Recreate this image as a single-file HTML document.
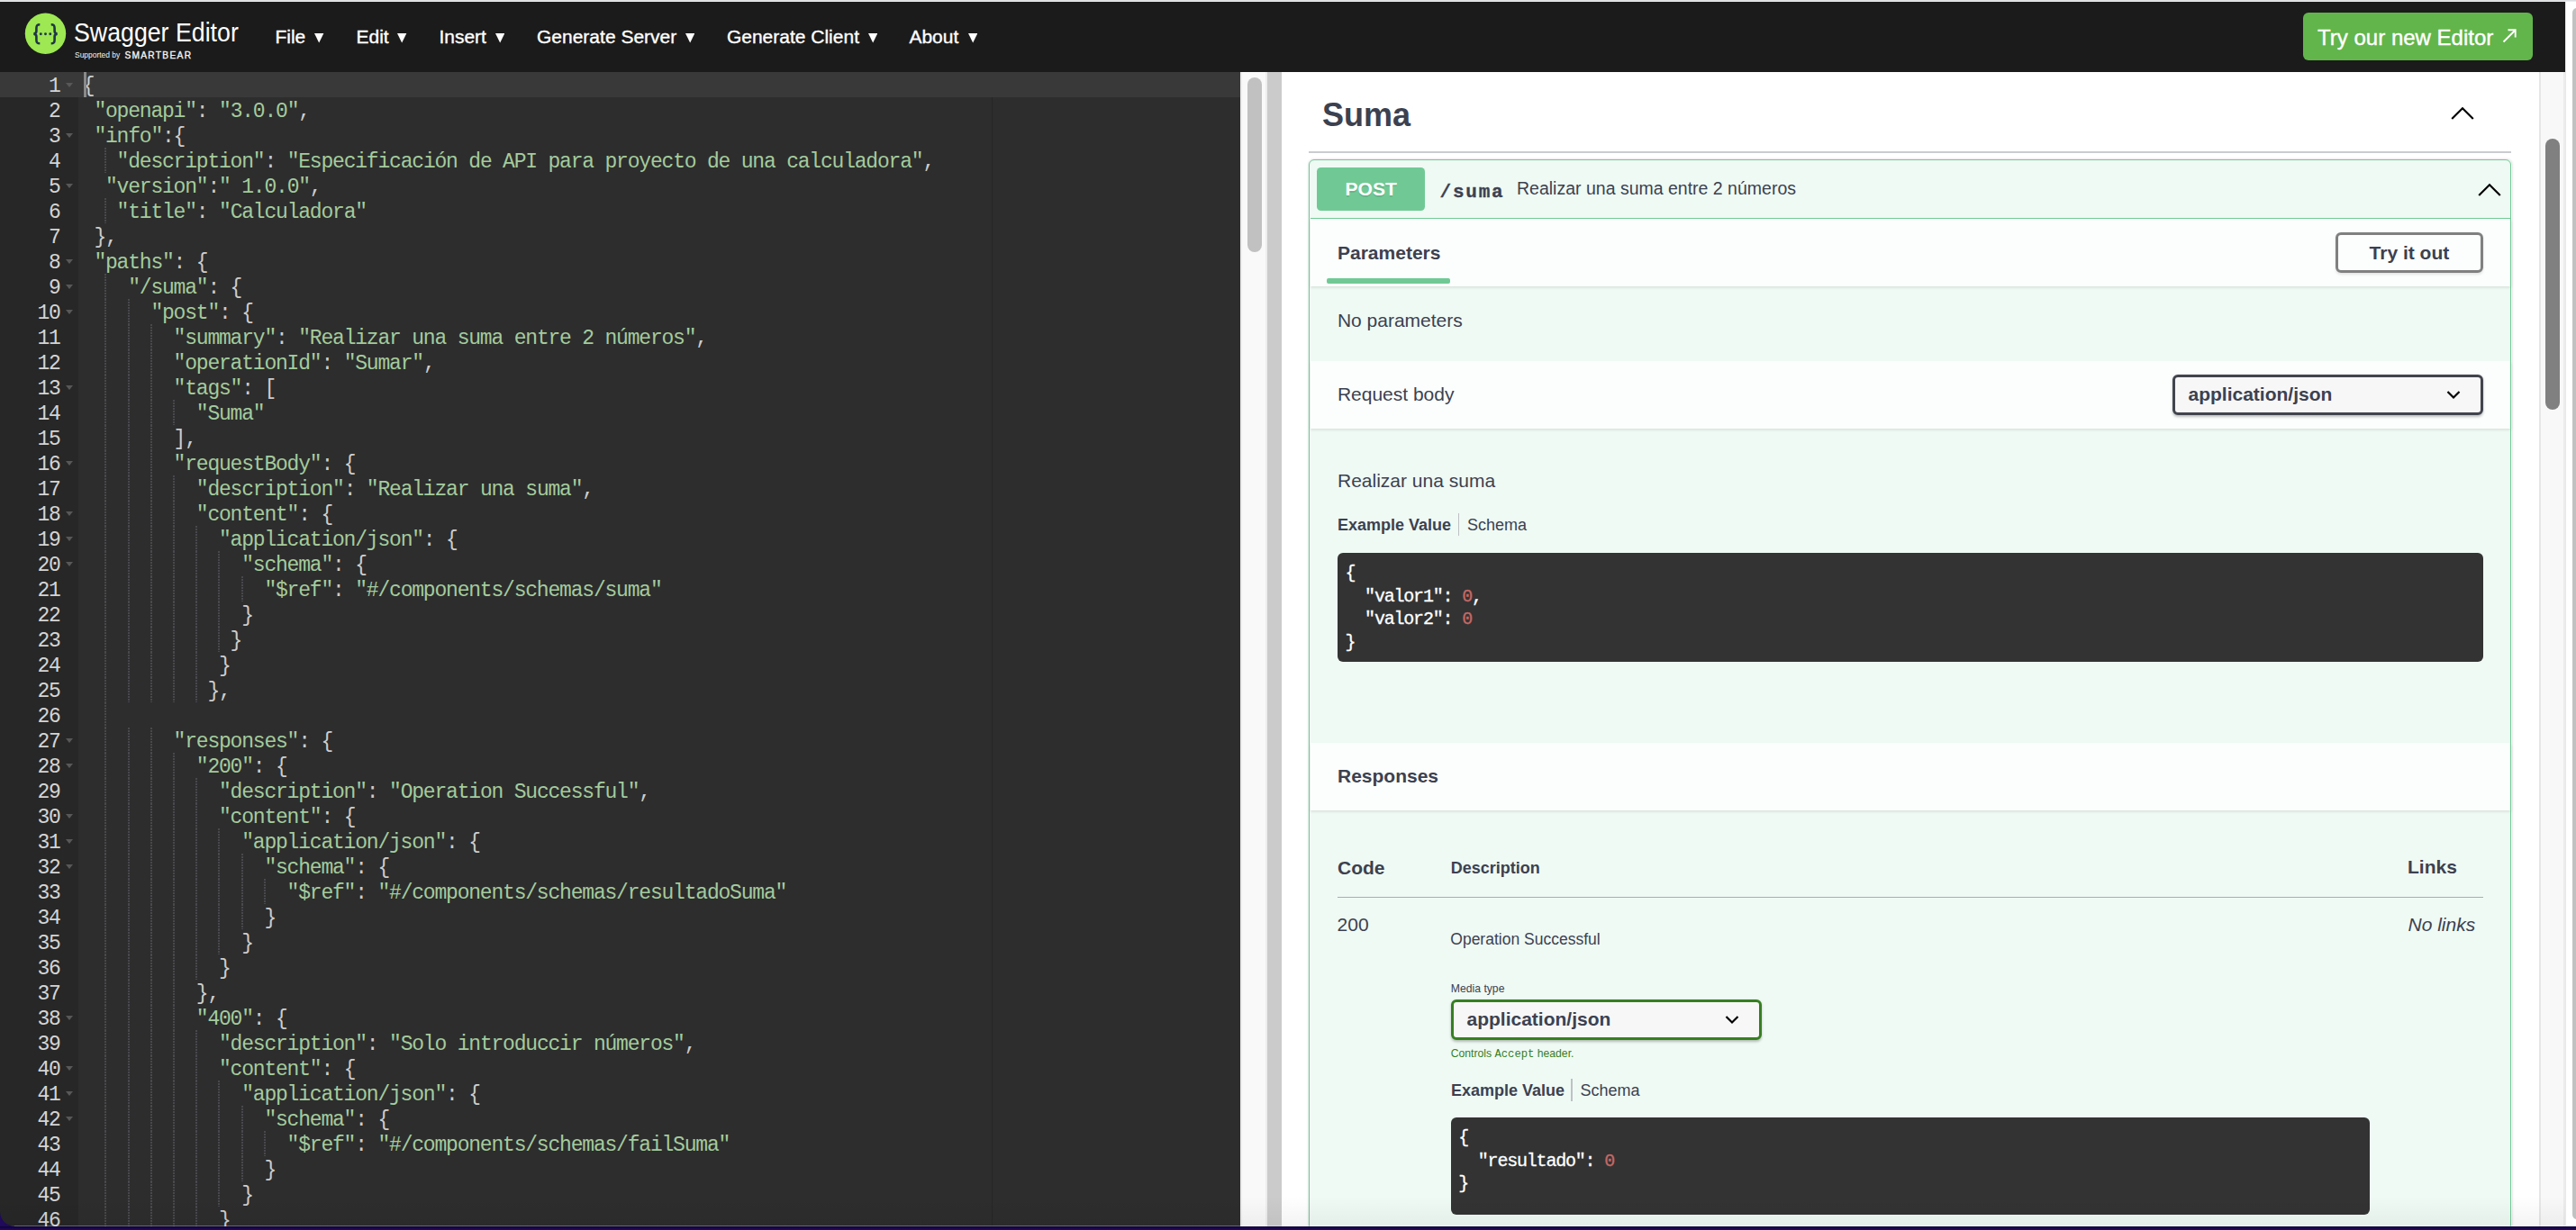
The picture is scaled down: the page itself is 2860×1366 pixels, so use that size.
<!DOCTYPE html>
<html><head><meta charset="utf-8"><title>Swagger Editor</title><style>
html,body{margin:0;padding:0;}
body{width:2860px;height:1366px;overflow:hidden;position:relative;background:#fff;font-family:"Liberation Sans",sans-serif;}
.a{position:absolute;box-sizing:content-box;}
.t{position:absolute;white-space:pre;}
.ln{position:absolute;left:0;width:66.6px;height:28px;line-height:28px;text-align:right;font-family:"Liberation Mono",monospace;font-size:23px;letter-spacing:-1.2px;color:#d4d4d4;}
.fw{position:absolute;left:73px;width:0;height:0;border-left:4px solid transparent;border-right:4px solid transparent;border-top:5px solid #585858;}
.ig{position:absolute;width:2px;height:28px;background:repeating-linear-gradient(#48484d 0 1.75px,transparent 1.75px 3px);}
.cl{position:absolute;height:28px;line-height:28px;white-space:pre;font-family:"Liberation Mono",monospace;font-size:23px;letter-spacing:-1.2px;color:#cccccc;}
.cl .s{color:#a4cb9d;}
.mc{position:absolute;height:25.5px;line-height:25.5px;white-space:pre;font-family:"Liberation Mono",monospace;font-size:20px;letter-spacing:-1.2px;color:#ffffff;-webkit-text-stroke:0.3px #fff;}
.mc .n{-webkit-text-stroke:0.3px #c56966;}
.mc .n{color:#c56966;}
</style></head><body>
<div class="a" style="left:0.00px;top:0.00px;width:2860.00px;height:1.00px;background:#dcdde0"></div>
<div class="a" style="left:0.00px;top:1.00px;width:2860.00px;height:1.20px;background:#ececec"></div>
<div class="a" style="left:0.00px;top:2.00px;width:2848.00px;height:78.00px;background:#1b1b1b"></div>
<svg class="a" style="left:0;top:0" width="300" height="80" viewBox="0 0 300 80">
<circle cx="50.5" cy="37.3" r="22.7" fill="#9de853"/>
<path d="M44.3,27.2 C41.2,27.2 40.4,28.4 40.4,31.2 L40.4,34.6 C40.4,36.5 39.4,37.4 37.4,37.6 C39.4,37.8 40.4,38.7 40.4,40.6 L40.4,44.2 C40.4,47 41.2,48.2 44.3,48.2" fill="none" stroke="#1f3545" stroke-width="2.6"/>
<path d="M56.7,27.2 C59.8,27.2 60.6,28.4 60.6,31.2 L60.6,34.6 C60.6,36.5 61.6,37.4 63.6,37.6 C61.6,37.8 60.6,38.7 60.6,40.6 L60.6,44.2 C60.6,47 59.8,48.2 56.7,48.2" fill="none" stroke="#1f3545" stroke-width="2.6"/>
<circle cx="45.3" cy="37.7" r="1.45" fill="#1f3545"/>
<circle cx="50.5" cy="37.7" r="1.45" fill="#1f3545"/>
<circle cx="55.8" cy="37.7" r="1.45" fill="#1f3545"/>
</svg>
<div class="t" style="left:81.50px;top:22.05px;font-size:29px;line-height:29px;color:#ffffff;font-weight:normal;font-style:normal;font-family:'Liberation Sans', sans-serif;transform:scaleX(0.922);transform-origin:0 0;">Swagger Editor</div>
<div class="t" style="left:82.50px;top:57.01px;font-size:9.2px;line-height:9.2px;color:#f4f4f4;font-weight:normal;font-style:normal;font-family:'Liberation Sans', sans-serif;transform:scaleX(0.92);transform-origin:0 0;">Supported by</div>
<div class="t" style="left:138.40px;top:56.56px;font-size:10.2px;line-height:10.2px;color:#f4f4f4;font-weight:normal;font-style:normal;font-family:'Liberation Sans', sans-serif;letter-spacing:1.3px;-webkit-text-stroke:0.35px #f4f4f4;">SMARTBEAR</div>
<div class="t" style="left:305.40px;top:30.12px;font-size:21px;line-height:21px;color:#ffffff;font-weight:normal;font-style:normal;font-family:'Liberation Sans', sans-serif;-webkit-text-stroke:0.35px #fff;">File</div>
<svg class="a" style="left:349.20px;top:37.3px" width="10.4" height="10.6" viewBox="0 0 10.4 10.6"><path d="M0,0 L10.4,0 L5.2,10.6 Z" fill="#ffffff"/></svg>
<div class="t" style="left:395.50px;top:30.12px;font-size:21px;line-height:21px;color:#ffffff;font-weight:normal;font-style:normal;font-family:'Liberation Sans', sans-serif;-webkit-text-stroke:0.35px #fff;">Edit</div>
<svg class="a" style="left:441.40px;top:37.3px" width="10.4" height="10.6" viewBox="0 0 10.4 10.6"><path d="M0,0 L10.4,0 L5.2,10.6 Z" fill="#ffffff"/></svg>
<div class="t" style="left:487.40px;top:30.12px;font-size:21px;line-height:21px;color:#ffffff;font-weight:normal;font-style:normal;font-family:'Liberation Sans', sans-serif;-webkit-text-stroke:0.35px #fff;">Insert</div>
<svg class="a" style="left:549.50px;top:37.3px" width="10.4" height="10.6" viewBox="0 0 10.4 10.6"><path d="M0,0 L10.4,0 L5.2,10.6 Z" fill="#ffffff"/></svg>
<div class="t" style="left:596.00px;top:30.12px;font-size:21px;line-height:21px;color:#ffffff;font-weight:normal;font-style:normal;font-family:'Liberation Sans', sans-serif;-webkit-text-stroke:0.35px #fff;">Generate Server</div>
<svg class="a" style="left:761.00px;top:37.3px" width="10.4" height="10.6" viewBox="0 0 10.4 10.6"><path d="M0,0 L10.4,0 L5.2,10.6 Z" fill="#ffffff"/></svg>
<div class="t" style="left:806.90px;top:30.12px;font-size:21px;line-height:21px;color:#ffffff;font-weight:normal;font-style:normal;font-family:'Liberation Sans', sans-serif;-webkit-text-stroke:0.35px #fff;">Generate Client</div>
<svg class="a" style="left:964.10px;top:37.3px" width="10.4" height="10.6" viewBox="0 0 10.4 10.6"><path d="M0,0 L10.4,0 L5.2,10.6 Z" fill="#ffffff"/></svg>
<div class="t" style="left:1009.40px;top:30.12px;font-size:21px;line-height:21px;color:#ffffff;font-weight:normal;font-style:normal;font-family:'Liberation Sans', sans-serif;-webkit-text-stroke:0.35px #fff;">About</div>
<svg class="a" style="left:1074.50px;top:37.3px" width="10.4" height="10.6" viewBox="0 0 10.4 10.6"><path d="M0,0 L10.4,0 L5.2,10.6 Z" fill="#ffffff"/></svg>
<div class="a" style="left:2557.00px;top:14.00px;width:255.00px;height:53.00px;background:#62b54b;border-radius:6px"></div>
<div class="t" style="left:2573.10px;top:29.58px;font-size:24px;line-height:24px;color:#ffffff;font-weight:normal;font-style:normal;font-family:'Liberation Sans', sans-serif;-webkit-text-stroke:0.4px #fff;">Try our new Editor</div>
<svg class="a" style="left:2777px;top:30px" width="20" height="20" viewBox="0 0 20 20"><path d="M2.5,16.5 L15.5,3.5 M7.5,3.3 L15.7,3.3 L15.7,11.5" fill="none" stroke="#ffffff" stroke-width="1.9"/></svg>
<div class="a" style="left:2848.00px;top:80.00px;width:12.00px;height:1282.00px;background:#ffffff"></div>
<div class="a" style="left:2848.00px;top:2.00px;width:12.00px;height:78.00px;background:#ffffff"></div>
<div class="a" style="left:2848.00px;top:2.00px;width:1.00px;height:1360.00px;background:#e9e9e9"></div>
<div class="a" style="left:2856.00px;top:9.00px;width:10.00px;height:1344.50px;background:#c1c1c1;border-radius:6px"></div>
<div class="a" style="left:0.00px;top:80.00px;width:1377.00px;height:1282.00px;background:#2d2d2d"></div>
<div class="a" style="left:0.00px;top:80.00px;width:87.00px;height:1282.00px;background:#272727"></div>
<div class="a" style="left:1101.00px;top:108.00px;width:1.20px;height:1254.00px;background:#262626"></div>
<div class="a" style="left:0.00px;top:80.00px;width:1377.00px;height:28.00px;background:#393939"></div>
<div class="a" style="left:0;top:80px;width:1377px;height:1282px;overflow:hidden">
<div class="ln" style="top:1.9px">1</div>
<div class="fw" style="top:11.8px"></div>
<div class="cl" style="top:1.9px;left:91.80px">{</div>
<div class="ln" style="top:29.9px">2</div>
<div class="cl" style="top:29.9px;left:104.40px"><span class="s">&quot;openapi&quot;</span>: <span class="s">&quot;3.0.0&quot;</span>,</div>
<div class="ln" style="top:57.9px">3</div>
<div class="fw" style="top:67.8px"></div>
<div class="cl" style="top:57.9px;left:104.40px"><span class="s">&quot;info&quot;</span>:{</div>
<div class="ln" style="top:85.9px">4</div>
<div class="ig" style="left:116.4px;top:84.0px"></div>
<div class="cl" style="top:85.9px;left:129.60px"><span class="s">&quot;description&quot;</span>: <span class="s">&quot;Especificación de API para proyecto de una calculadora&quot;</span>,</div>
<div class="ln" style="top:113.9px">5</div>
<div class="fw" style="top:123.8px"></div>
<div class="cl" style="top:113.9px;left:117.00px"><span class="s">&quot;version&quot;</span>:<span class="s">&quot; 1.0.0&quot;</span>,</div>
<div class="ln" style="top:141.9px">6</div>
<div class="ig" style="left:116.4px;top:140.0px"></div>
<div class="cl" style="top:141.9px;left:129.60px"><span class="s">&quot;title&quot;</span>: <span class="s">&quot;Calculadora&quot;</span></div>
<div class="ln" style="top:169.9px">7</div>
<div class="cl" style="top:169.9px;left:104.40px">},</div>
<div class="ln" style="top:197.9px">8</div>
<div class="fw" style="top:207.8px"></div>
<div class="cl" style="top:197.9px;left:104.40px"><span class="s">&quot;paths&quot;</span>: {</div>
<div class="ln" style="top:225.9px">9</div>
<div class="fw" style="top:235.8px"></div>
<div class="ig" style="left:116.4px;top:224.0px"></div>
<div class="cl" style="top:225.9px;left:142.20px"><span class="s">&quot;/suma&quot;</span>: {</div>
<div class="ln" style="top:253.9px">10</div>
<div class="fw" style="top:263.8px"></div>
<div class="ig" style="left:116.4px;top:252.0px"></div>
<div class="ig" style="left:141.6px;top:252.0px"></div>
<div class="cl" style="top:253.9px;left:167.40px"><span class="s">&quot;post&quot;</span>: {</div>
<div class="ln" style="top:281.9px">11</div>
<div class="ig" style="left:116.4px;top:280.0px"></div>
<div class="ig" style="left:141.6px;top:280.0px"></div>
<div class="ig" style="left:166.8px;top:280.0px"></div>
<div class="cl" style="top:281.9px;left:192.60px"><span class="s">&quot;summary&quot;</span>: <span class="s">&quot;Realizar una suma entre 2 números&quot;</span>,</div>
<div class="ln" style="top:309.9px">12</div>
<div class="ig" style="left:116.4px;top:308.0px"></div>
<div class="ig" style="left:141.6px;top:308.0px"></div>
<div class="ig" style="left:166.8px;top:308.0px"></div>
<div class="cl" style="top:309.9px;left:192.60px"><span class="s">&quot;operationId&quot;</span>: <span class="s">&quot;Sumar&quot;</span>,</div>
<div class="ln" style="top:337.9px">13</div>
<div class="fw" style="top:347.8px"></div>
<div class="ig" style="left:116.4px;top:336.0px"></div>
<div class="ig" style="left:141.6px;top:336.0px"></div>
<div class="ig" style="left:166.8px;top:336.0px"></div>
<div class="cl" style="top:337.9px;left:192.60px"><span class="s">&quot;tags&quot;</span>: [</div>
<div class="ln" style="top:365.9px">14</div>
<div class="ig" style="left:116.4px;top:364.0px"></div>
<div class="ig" style="left:141.6px;top:364.0px"></div>
<div class="ig" style="left:166.8px;top:364.0px"></div>
<div class="ig" style="left:192.0px;top:364.0px"></div>
<div class="cl" style="top:365.9px;left:217.80px"><span class="s">&quot;Suma&quot;</span></div>
<div class="ln" style="top:393.9px">15</div>
<div class="ig" style="left:116.4px;top:392.0px"></div>
<div class="ig" style="left:141.6px;top:392.0px"></div>
<div class="ig" style="left:166.8px;top:392.0px"></div>
<div class="cl" style="top:393.9px;left:192.60px">],</div>
<div class="ln" style="top:421.9px">16</div>
<div class="fw" style="top:431.8px"></div>
<div class="ig" style="left:116.4px;top:420.0px"></div>
<div class="ig" style="left:141.6px;top:420.0px"></div>
<div class="ig" style="left:166.8px;top:420.0px"></div>
<div class="cl" style="top:421.9px;left:192.60px"><span class="s">&quot;requestBody&quot;</span>: {</div>
<div class="ln" style="top:449.9px">17</div>
<div class="ig" style="left:116.4px;top:448.0px"></div>
<div class="ig" style="left:141.6px;top:448.0px"></div>
<div class="ig" style="left:166.8px;top:448.0px"></div>
<div class="ig" style="left:192.0px;top:448.0px"></div>
<div class="cl" style="top:449.9px;left:217.80px"><span class="s">&quot;description&quot;</span>: <span class="s">&quot;Realizar una suma&quot;</span>,</div>
<div class="ln" style="top:477.9px">18</div>
<div class="fw" style="top:487.8px"></div>
<div class="ig" style="left:116.4px;top:476.0px"></div>
<div class="ig" style="left:141.6px;top:476.0px"></div>
<div class="ig" style="left:166.8px;top:476.0px"></div>
<div class="ig" style="left:192.0px;top:476.0px"></div>
<div class="cl" style="top:477.9px;left:217.80px"><span class="s">&quot;content&quot;</span>: {</div>
<div class="ln" style="top:505.9px">19</div>
<div class="fw" style="top:515.8px"></div>
<div class="ig" style="left:116.4px;top:504.0px"></div>
<div class="ig" style="left:141.6px;top:504.0px"></div>
<div class="ig" style="left:166.8px;top:504.0px"></div>
<div class="ig" style="left:192.0px;top:504.0px"></div>
<div class="ig" style="left:217.2px;top:504.0px"></div>
<div class="cl" style="top:505.9px;left:243.00px"><span class="s">&quot;application/json&quot;</span>: {</div>
<div class="ln" style="top:533.9px">20</div>
<div class="fw" style="top:543.8px"></div>
<div class="ig" style="left:116.4px;top:532.0px"></div>
<div class="ig" style="left:141.6px;top:532.0px"></div>
<div class="ig" style="left:166.8px;top:532.0px"></div>
<div class="ig" style="left:192.0px;top:532.0px"></div>
<div class="ig" style="left:217.2px;top:532.0px"></div>
<div class="ig" style="left:242.4px;top:532.0px"></div>
<div class="cl" style="top:533.9px;left:268.20px"><span class="s">&quot;schema&quot;</span>: {</div>
<div class="ln" style="top:561.9px">21</div>
<div class="ig" style="left:116.4px;top:560.0px"></div>
<div class="ig" style="left:141.6px;top:560.0px"></div>
<div class="ig" style="left:166.8px;top:560.0px"></div>
<div class="ig" style="left:192.0px;top:560.0px"></div>
<div class="ig" style="left:217.2px;top:560.0px"></div>
<div class="ig" style="left:242.4px;top:560.0px"></div>
<div class="ig" style="left:267.6px;top:560.0px"></div>
<div class="cl" style="top:561.9px;left:293.40px"><span class="s">&quot;$ref&quot;</span>: <span class="s">&quot;#/components/schemas/suma&quot;</span></div>
<div class="ln" style="top:589.9px">22</div>
<div class="ig" style="left:116.4px;top:588.0px"></div>
<div class="ig" style="left:141.6px;top:588.0px"></div>
<div class="ig" style="left:166.8px;top:588.0px"></div>
<div class="ig" style="left:192.0px;top:588.0px"></div>
<div class="ig" style="left:217.2px;top:588.0px"></div>
<div class="ig" style="left:242.4px;top:588.0px"></div>
<div class="cl" style="top:589.9px;left:268.20px">}</div>
<div class="ln" style="top:617.9px">23</div>
<div class="ig" style="left:116.4px;top:616.0px"></div>
<div class="ig" style="left:141.6px;top:616.0px"></div>
<div class="ig" style="left:166.8px;top:616.0px"></div>
<div class="ig" style="left:192.0px;top:616.0px"></div>
<div class="ig" style="left:217.2px;top:616.0px"></div>
<div class="ig" style="left:242.4px;top:616.0px"></div>
<div class="cl" style="top:617.9px;left:255.60px">}</div>
<div class="ln" style="top:645.9px">24</div>
<div class="ig" style="left:116.4px;top:644.0px"></div>
<div class="ig" style="left:141.6px;top:644.0px"></div>
<div class="ig" style="left:166.8px;top:644.0px"></div>
<div class="ig" style="left:192.0px;top:644.0px"></div>
<div class="ig" style="left:217.2px;top:644.0px"></div>
<div class="cl" style="top:645.9px;left:243.00px">}</div>
<div class="ln" style="top:673.9px">25</div>
<div class="ig" style="left:116.4px;top:672.0px"></div>
<div class="ig" style="left:141.6px;top:672.0px"></div>
<div class="ig" style="left:166.8px;top:672.0px"></div>
<div class="ig" style="left:192.0px;top:672.0px"></div>
<div class="ig" style="left:217.2px;top:672.0px"></div>
<div class="cl" style="top:673.9px;left:230.40px">},</div>
<div class="ln" style="top:701.9px">26</div>
<div class="ig" style="left:116.4px;top:700.0px"></div>
<div class="ln" style="top:729.9px">27</div>
<div class="fw" style="top:739.8px"></div>
<div class="ig" style="left:116.4px;top:728.0px"></div>
<div class="ig" style="left:141.6px;top:728.0px"></div>
<div class="ig" style="left:166.8px;top:728.0px"></div>
<div class="cl" style="top:729.9px;left:192.60px"><span class="s">&quot;responses&quot;</span>: {</div>
<div class="ln" style="top:757.9px">28</div>
<div class="fw" style="top:767.8px"></div>
<div class="ig" style="left:116.4px;top:756.0px"></div>
<div class="ig" style="left:141.6px;top:756.0px"></div>
<div class="ig" style="left:166.8px;top:756.0px"></div>
<div class="ig" style="left:192.0px;top:756.0px"></div>
<div class="cl" style="top:757.9px;left:217.80px"><span class="s">&quot;200&quot;</span>: {</div>
<div class="ln" style="top:785.9px">29</div>
<div class="ig" style="left:116.4px;top:784.0px"></div>
<div class="ig" style="left:141.6px;top:784.0px"></div>
<div class="ig" style="left:166.8px;top:784.0px"></div>
<div class="ig" style="left:192.0px;top:784.0px"></div>
<div class="ig" style="left:217.2px;top:784.0px"></div>
<div class="cl" style="top:785.9px;left:243.00px"><span class="s">&quot;description&quot;</span>: <span class="s">&quot;Operation Successful&quot;</span>,</div>
<div class="ln" style="top:813.9px">30</div>
<div class="fw" style="top:823.8px"></div>
<div class="ig" style="left:116.4px;top:812.0px"></div>
<div class="ig" style="left:141.6px;top:812.0px"></div>
<div class="ig" style="left:166.8px;top:812.0px"></div>
<div class="ig" style="left:192.0px;top:812.0px"></div>
<div class="ig" style="left:217.2px;top:812.0px"></div>
<div class="cl" style="top:813.9px;left:243.00px"><span class="s">&quot;content&quot;</span>: {</div>
<div class="ln" style="top:841.9px">31</div>
<div class="fw" style="top:851.8px"></div>
<div class="ig" style="left:116.4px;top:840.0px"></div>
<div class="ig" style="left:141.6px;top:840.0px"></div>
<div class="ig" style="left:166.8px;top:840.0px"></div>
<div class="ig" style="left:192.0px;top:840.0px"></div>
<div class="ig" style="left:217.2px;top:840.0px"></div>
<div class="ig" style="left:242.4px;top:840.0px"></div>
<div class="cl" style="top:841.9px;left:268.20px"><span class="s">&quot;application/json&quot;</span>: {</div>
<div class="ln" style="top:869.9px">32</div>
<div class="fw" style="top:879.8px"></div>
<div class="ig" style="left:116.4px;top:868.0px"></div>
<div class="ig" style="left:141.6px;top:868.0px"></div>
<div class="ig" style="left:166.8px;top:868.0px"></div>
<div class="ig" style="left:192.0px;top:868.0px"></div>
<div class="ig" style="left:217.2px;top:868.0px"></div>
<div class="ig" style="left:242.4px;top:868.0px"></div>
<div class="ig" style="left:267.6px;top:868.0px"></div>
<div class="cl" style="top:869.9px;left:293.40px"><span class="s">&quot;schema&quot;</span>: {</div>
<div class="ln" style="top:897.9px">33</div>
<div class="ig" style="left:116.4px;top:896.0px"></div>
<div class="ig" style="left:141.6px;top:896.0px"></div>
<div class="ig" style="left:166.8px;top:896.0px"></div>
<div class="ig" style="left:192.0px;top:896.0px"></div>
<div class="ig" style="left:217.2px;top:896.0px"></div>
<div class="ig" style="left:242.4px;top:896.0px"></div>
<div class="ig" style="left:267.6px;top:896.0px"></div>
<div class="ig" style="left:292.8px;top:896.0px"></div>
<div class="cl" style="top:897.9px;left:318.60px"><span class="s">&quot;$ref&quot;</span>: <span class="s">&quot;#/components/schemas/resultadoSuma&quot;</span></div>
<div class="ln" style="top:925.9px">34</div>
<div class="ig" style="left:116.4px;top:924.0px"></div>
<div class="ig" style="left:141.6px;top:924.0px"></div>
<div class="ig" style="left:166.8px;top:924.0px"></div>
<div class="ig" style="left:192.0px;top:924.0px"></div>
<div class="ig" style="left:217.2px;top:924.0px"></div>
<div class="ig" style="left:242.4px;top:924.0px"></div>
<div class="ig" style="left:267.6px;top:924.0px"></div>
<div class="cl" style="top:925.9px;left:293.40px">}</div>
<div class="ln" style="top:953.9px">35</div>
<div class="ig" style="left:116.4px;top:952.0px"></div>
<div class="ig" style="left:141.6px;top:952.0px"></div>
<div class="ig" style="left:166.8px;top:952.0px"></div>
<div class="ig" style="left:192.0px;top:952.0px"></div>
<div class="ig" style="left:217.2px;top:952.0px"></div>
<div class="ig" style="left:242.4px;top:952.0px"></div>
<div class="cl" style="top:953.9px;left:268.20px">}</div>
<div class="ln" style="top:981.9px">36</div>
<div class="ig" style="left:116.4px;top:980.0px"></div>
<div class="ig" style="left:141.6px;top:980.0px"></div>
<div class="ig" style="left:166.8px;top:980.0px"></div>
<div class="ig" style="left:192.0px;top:980.0px"></div>
<div class="ig" style="left:217.2px;top:980.0px"></div>
<div class="cl" style="top:981.9px;left:243.00px">}</div>
<div class="ln" style="top:1009.9px">37</div>
<div class="ig" style="left:116.4px;top:1008.0px"></div>
<div class="ig" style="left:141.6px;top:1008.0px"></div>
<div class="ig" style="left:166.8px;top:1008.0px"></div>
<div class="ig" style="left:192.0px;top:1008.0px"></div>
<div class="cl" style="top:1009.9px;left:217.80px">},</div>
<div class="ln" style="top:1037.9px">38</div>
<div class="fw" style="top:1047.8px"></div>
<div class="ig" style="left:116.4px;top:1036.0px"></div>
<div class="ig" style="left:141.6px;top:1036.0px"></div>
<div class="ig" style="left:166.8px;top:1036.0px"></div>
<div class="ig" style="left:192.0px;top:1036.0px"></div>
<div class="cl" style="top:1037.9px;left:217.80px"><span class="s">&quot;400&quot;</span>: {</div>
<div class="ln" style="top:1065.9px">39</div>
<div class="ig" style="left:116.4px;top:1064.0px"></div>
<div class="ig" style="left:141.6px;top:1064.0px"></div>
<div class="ig" style="left:166.8px;top:1064.0px"></div>
<div class="ig" style="left:192.0px;top:1064.0px"></div>
<div class="ig" style="left:217.2px;top:1064.0px"></div>
<div class="cl" style="top:1065.9px;left:243.00px"><span class="s">&quot;description&quot;</span>: <span class="s">&quot;Solo introduccir números&quot;</span>,</div>
<div class="ln" style="top:1093.9px">40</div>
<div class="fw" style="top:1103.8px"></div>
<div class="ig" style="left:116.4px;top:1092.0px"></div>
<div class="ig" style="left:141.6px;top:1092.0px"></div>
<div class="ig" style="left:166.8px;top:1092.0px"></div>
<div class="ig" style="left:192.0px;top:1092.0px"></div>
<div class="ig" style="left:217.2px;top:1092.0px"></div>
<div class="cl" style="top:1093.9px;left:243.00px"><span class="s">&quot;content&quot;</span>: {</div>
<div class="ln" style="top:1121.9px">41</div>
<div class="fw" style="top:1131.8px"></div>
<div class="ig" style="left:116.4px;top:1120.0px"></div>
<div class="ig" style="left:141.6px;top:1120.0px"></div>
<div class="ig" style="left:166.8px;top:1120.0px"></div>
<div class="ig" style="left:192.0px;top:1120.0px"></div>
<div class="ig" style="left:217.2px;top:1120.0px"></div>
<div class="ig" style="left:242.4px;top:1120.0px"></div>
<div class="cl" style="top:1121.9px;left:268.20px"><span class="s">&quot;application/json&quot;</span>: {</div>
<div class="ln" style="top:1149.9px">42</div>
<div class="fw" style="top:1159.8px"></div>
<div class="ig" style="left:116.4px;top:1148.0px"></div>
<div class="ig" style="left:141.6px;top:1148.0px"></div>
<div class="ig" style="left:166.8px;top:1148.0px"></div>
<div class="ig" style="left:192.0px;top:1148.0px"></div>
<div class="ig" style="left:217.2px;top:1148.0px"></div>
<div class="ig" style="left:242.4px;top:1148.0px"></div>
<div class="ig" style="left:267.6px;top:1148.0px"></div>
<div class="cl" style="top:1149.9px;left:293.40px"><span class="s">&quot;schema&quot;</span>: {</div>
<div class="ln" style="top:1177.9px">43</div>
<div class="ig" style="left:116.4px;top:1176.0px"></div>
<div class="ig" style="left:141.6px;top:1176.0px"></div>
<div class="ig" style="left:166.8px;top:1176.0px"></div>
<div class="ig" style="left:192.0px;top:1176.0px"></div>
<div class="ig" style="left:217.2px;top:1176.0px"></div>
<div class="ig" style="left:242.4px;top:1176.0px"></div>
<div class="ig" style="left:267.6px;top:1176.0px"></div>
<div class="ig" style="left:292.8px;top:1176.0px"></div>
<div class="cl" style="top:1177.9px;left:318.60px"><span class="s">&quot;$ref&quot;</span>: <span class="s">&quot;#/components/schemas/failSuma&quot;</span></div>
<div class="ln" style="top:1205.9px">44</div>
<div class="ig" style="left:116.4px;top:1204.0px"></div>
<div class="ig" style="left:141.6px;top:1204.0px"></div>
<div class="ig" style="left:166.8px;top:1204.0px"></div>
<div class="ig" style="left:192.0px;top:1204.0px"></div>
<div class="ig" style="left:217.2px;top:1204.0px"></div>
<div class="ig" style="left:242.4px;top:1204.0px"></div>
<div class="ig" style="left:267.6px;top:1204.0px"></div>
<div class="cl" style="top:1205.9px;left:293.40px">}</div>
<div class="ln" style="top:1233.9px">45</div>
<div class="ig" style="left:116.4px;top:1232.0px"></div>
<div class="ig" style="left:141.6px;top:1232.0px"></div>
<div class="ig" style="left:166.8px;top:1232.0px"></div>
<div class="ig" style="left:192.0px;top:1232.0px"></div>
<div class="ig" style="left:217.2px;top:1232.0px"></div>
<div class="ig" style="left:242.4px;top:1232.0px"></div>
<div class="cl" style="top:1233.9px;left:268.20px">}</div>
<div class="ln" style="top:1261.9px">46</div>
<div class="ig" style="left:116.4px;top:1260.0px"></div>
<div class="ig" style="left:141.6px;top:1260.0px"></div>
<div class="ig" style="left:166.8px;top:1260.0px"></div>
<div class="ig" style="left:192.0px;top:1260.0px"></div>
<div class="ig" style="left:217.2px;top:1260.0px"></div>
<div class="cl" style="top:1261.9px;left:243.00px">}</div>
<div class="a" style="left:93px;top:0;width:3px;height:28px;background:#8a8a8a"></div>
</div>
<div class="a" style="left:1377.00px;top:80.00px;width:30.00px;height:1282.00px;background:#f9f9f9"></div>
<div class="a" style="left:1377.00px;top:80.00px;width:1.50px;height:1282.00px;background:#ececec"></div>
<div class="a" style="left:1405.00px;top:80.00px;width:2.00px;height:1282.00px;background:#eeeeee"></div>
<div class="a" style="left:1385.00px;top:86.00px;width:16.20px;height:194.00px;background:#c1c1c1;border-radius:8px"></div>
<div class="a" style="left:1407.00px;top:80.00px;width:16.00px;height:1282.00px;background:#cbcbcb"></div>
<div class="a" style="left:1423.00px;top:80.00px;width:1425.00px;height:1282.00px;background:#ffffff"></div>
<div class="a" style="left:2819.00px;top:80.00px;width:29.00px;height:1282.00px;background:#f8f8f8"></div>
<div class="a" style="left:2819.00px;top:80.00px;width:1.50px;height:1282.00px;background:#e6e6e6"></div>
<div class="a" style="left:2846.00px;top:80.00px;width:2.00px;height:1282.00px;background:#ececec"></div>
<div class="a" style="left:2826.00px;top:154.00px;width:16.00px;height:301.00px;background:#808080;border-radius:8px"></div>
<div class="t" style="left:1468.00px;top:110.22px;font-size:36px;line-height:36px;color:#3c4150;font-weight:bold;font-style:normal;font-family:'Liberation Sans', sans-serif;">Suma</div>
<svg class="a" style="left:2719px;top:117px" width="30" height="18" viewBox="0 0 30 18"><path d="M3.2,15 L15,3.2 L26.8,15" fill="none" stroke="#000" stroke-width="2.2"/></svg>
<div class="a" style="left:1453.00px;top:168.20px;width:1334.50px;height:1.50px;background:#c9cbd0"></div>
<div class="a" style="left:1453px;top:177px;width:1336px;height:1300px;border-radius:6px;background:#effaf4;box-shadow:0 0 3px rgba(0,0,0,.19)"></div>
<div class="a" style="left:1462.00px;top:186.00px;width:120.00px;height:47.50px;background:#70c995;border-radius:4.5px"></div>
<div class="t" style="left:1493.60px;top:198.72px;font-size:21px;line-height:21px;color:#ffffff;font-weight:bold;font-style:normal;font-family:'Liberation Sans', sans-serif;text-shadow:0 1.5px 0 rgba(0,0,0,.1)">POST</div>
<div class="t" style="left:1598.50px;top:202.51px;font-size:21px;line-height:21px;color:#3c4150;font-weight:bold;font-style:normal;font-family:'Liberation Mono', monospace;letter-spacing:1.8px;-webkit-text-stroke:0.3px #3c4150;">/suma</div>
<div class="t" style="left:1684.00px;top:200.29px;font-size:19.5px;line-height:19.5px;color:#3c4150;font-weight:normal;font-style:normal;font-family:'Liberation Sans', sans-serif;">Realizar una suma entre 2 números</div>
<svg class="a" style="left:2749px;top:201px" width="30" height="19" viewBox="0 0 30 19"><path d="M3.2,16 L15,4.2 L26.8,16" fill="none" stroke="#000" stroke-width="2.2"/></svg>
<div class="a" style="left:1454.50px;top:241.50px;width:1333.00px;height:1.50px;background:#70c995"></div>
<div class="a" style="left:1454.50px;top:243.00px;width:1333.00px;height:75.00px;background:#fbfefd;box-shadow:0 1.5px 3px rgba(0,0,0,.1)"></div>
<div class="t" style="left:1485.00px;top:270.42px;font-size:21px;line-height:21px;color:#3c4150;font-weight:bold;font-style:normal;font-family:'Liberation Sans', sans-serif;">Parameters</div>
<div class="a" style="left:1473.00px;top:309.00px;width:137.00px;height:6.00px;background:#70c995;border-radius:2px"></div>
<div class="a" style="left:2593.3px;top:258px;width:157.5px;height:38.5px;border:3px solid #808080;border-radius:6px;background:transparent;box-shadow:0 1.5px 3px rgba(0,0,0,.1)"></div>
<div class="t" style="left:2630.60px;top:269.92px;font-size:21px;line-height:21px;color:#3c4150;font-weight:bold;font-style:normal;font-family:'Liberation Sans', sans-serif;">Try it out</div>
<div class="t" style="left:1484.90px;top:345.02px;font-size:21px;line-height:21px;color:#3c4150;font-weight:normal;font-style:normal;font-family:'Liberation Sans', sans-serif;">No parameters</div>
<div class="a" style="left:1454.50px;top:401.00px;width:1333.00px;height:75.00px;background:#fbfefd;box-shadow:0 1.5px 3px rgba(0,0,0,.1)"></div>
<div class="t" style="left:1484.90px;top:427.32px;font-size:21px;line-height:21px;color:#3c4150;font-weight:normal;font-style:normal;font-family:'Liberation Sans', sans-serif;">Request body</div>
<div class="a" style="left:2412px;top:416px;width:338.5px;height:38.5px;border:3px solid #42444d;border-radius:6px;background:#f7f7f7;box-shadow:0 1.5px 3px rgba(0,0,0,.25)"></div>
<div class="t" style="left:2429.50px;top:426.82px;font-size:21px;line-height:21px;color:#3c4150;font-weight:bold;font-style:normal;font-family:'Liberation Sans', sans-serif;">application/json</div>
<svg class="a" style="left:2715px;top:432px" width="18" height="14" viewBox="0 0 18 14"><path d="M2.5,3 L9,9.5 L15.5,3" fill="none" stroke="#000" stroke-width="2.2"/></svg>
<div class="t" style="left:1485.00px;top:522.92px;font-size:21px;line-height:21px;color:#3c4150;font-weight:normal;font-style:normal;font-family:'Liberation Sans', sans-serif;">Realizar una suma</div>
<div class="t" style="left:1485.00px;top:573.76px;font-size:18px;line-height:18px;color:#3c4150;font-weight:bold;font-style:normal;font-family:'Liberation Sans', sans-serif;">Example Value</div>
<div class="a" style="left:1618.50px;top:570.20px;width:1.50px;height:25.20px;background:#bfc0c4"></div>
<div class="t" style="left:1629.00px;top:573.76px;font-size:18px;line-height:18px;color:#3c4150;font-weight:normal;font-style:normal;font-family:'Liberation Sans', sans-serif;">Schema</div>
<div class="a" style="left:1485.00px;top:614.00px;width:1272.00px;height:121.00px;background:#333333;border-radius:6px"></div>
<div class="mc" style="left:1493.5px;top:624.0px">{</div>
<div class="mc" style="left:1493.5px;top:649.5px">  "valor1": <span class="n">0</span>,</div>
<div class="mc" style="left:1493.5px;top:675.0px">  "valor2": <span class="n">0</span></div>
<div class="mc" style="left:1493.5px;top:700.5px">}</div>
<div class="a" style="left:1454.50px;top:825.00px;width:1333.00px;height:75.00px;background:#fbfefd;box-shadow:0 1.5px 3px rgba(0,0,0,.1)"></div>
<div class="t" style="left:1485.00px;top:851.22px;font-size:21px;line-height:21px;color:#3c4150;font-weight:bold;font-style:normal;font-family:'Liberation Sans', sans-serif;">Responses</div>
<div class="t" style="left:1485.00px;top:952.52px;font-size:21px;line-height:21px;color:#3c4150;font-weight:bold;font-style:normal;font-family:'Liberation Sans', sans-serif;">Code</div>
<div class="t" style="left:1610.80px;top:954.66px;font-size:18px;line-height:18px;color:#3c4150;font-weight:bold;font-style:normal;font-family:'Liberation Sans', sans-serif;">Description</div>
<div class="t" style="left:2673.00px;top:952.32px;font-size:21px;line-height:21px;color:#3c4150;font-weight:bold;font-style:normal;font-family:'Liberation Sans', sans-serif;">Links</div>
<div class="a" style="left:1485.00px;top:995.50px;width:1272.00px;height:1.50px;background:#a9acb3"></div>
<div class="t" style="left:1484.60px;top:1016.22px;font-size:21px;line-height:21px;color:#3c4150;font-weight:normal;font-style:normal;font-family:'Liberation Sans', sans-serif;">200</div>
<div class="t" style="left:1610.30px;top:1035.18px;font-size:17.5px;line-height:17.5px;color:#3c4150;font-weight:normal;font-style:normal;font-family:'Liberation Sans', sans-serif;">Operation Successful</div>
<div class="t" style="left:2673.50px;top:1015.72px;font-size:21px;line-height:21px;color:#3c4150;font-weight:normal;font-style:italic;font-family:'Liberation Sans', sans-serif;">No links</div>
<div class="t" style="left:1610.80px;top:1091.87px;font-size:12.2px;line-height:12.2px;color:#3c4150;font-weight:normal;font-style:normal;font-family:'Liberation Sans', sans-serif;">Media type</div>
<div class="a" style="left:1611px;top:1110px;width:338.5px;height:38.5px;border:3px solid #377e22;border-radius:6px;background:#f7f7f7;box-shadow:0 1.5px 3px rgba(0,0,0,.25)"></div>
<div class="t" style="left:1628.50px;top:1121.22px;font-size:21px;line-height:21px;color:#3c4150;font-weight:bold;font-style:normal;font-family:'Liberation Sans', sans-serif;">application/json</div>
<svg class="a" style="left:1914px;top:1126px" width="18" height="14" viewBox="0 0 18 14"><path d="M2.5,3 L9,9.5 L15.5,3" fill="none" stroke="#000" stroke-width="2.2"/></svg>
<div class="t" style="left:1610.7px;top:1162px;font-size:12.2px;line-height:16px;color:#377e22;font-family:'Liberation Sans', sans-serif">Controls <span style="font-family:'Liberation Mono', monospace">Accept</span> header.</div>
<div class="t" style="left:1611.00px;top:1202.16px;font-size:18px;line-height:18px;color:#3c4150;font-weight:bold;font-style:normal;font-family:'Liberation Sans', sans-serif;">Example Value</div>
<div class="a" style="left:1744.00px;top:1198.00px;width:1.50px;height:24.50px;background:#bfc0c4"></div>
<div class="t" style="left:1754.50px;top:1202.16px;font-size:18px;line-height:18px;color:#3c4150;font-weight:normal;font-style:normal;font-family:'Liberation Sans', sans-serif;">Schema</div>
<div class="a" style="left:1611.00px;top:1241.00px;width:1020.00px;height:108.00px;background:#333333;border-radius:6px"></div>
<div class="mc" style="left:1619.2px;top:1251.3px">{</div>
<div class="mc" style="left:1619.2px;top:1276.8px">  "resultado": <span class="n">0</span></div>
<div class="mc" style="left:1619.2px;top:1302.3px">}</div>
<div class="a" style="left:1453px;top:177px;width:1333px;height:1300px;border:1.5px solid #70c995;border-radius:6px;"></div>
<div class="a" style="left:0.00px;top:1328.00px;width:2848.00px;height:33.00px;background:linear-gradient(rgba(0,0,0,0),rgba(0,0,0,0.045))"></div>
<div class="a" style="left:0.00px;top:1360.80px;width:2860.00px;height:1.00px;background:rgba(255,255,255,0.28)"></div>
<div class="a" style="left:0.00px;top:1361.80px;width:2860.00px;height:5.00px;background:linear-gradient(#0c0333,#2a0a72)"></div>
<svg class="a" style="left:0;top:1346px" width="16" height="16" viewBox="0 0 16 16"><path d="M0,0 L0,16 L16,16 L16,15.5 C7,15.5 0.5,9 0,0 Z" fill="#1f0a5c"/></svg>
</body></html>
